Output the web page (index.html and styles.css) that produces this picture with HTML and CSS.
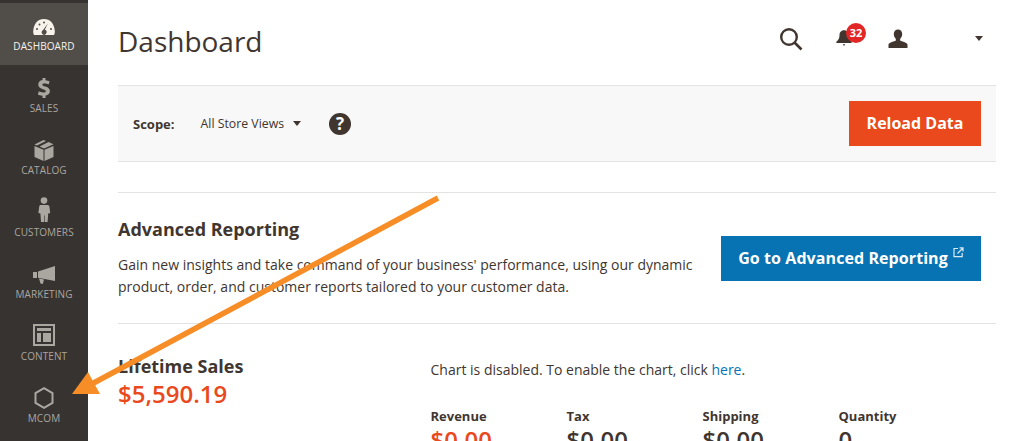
FILE: index.html
```html
<!DOCTYPE html>
<html lang="en">
<head>
<meta charset="utf-8">
<title>Dashboard</title>
<link rel="stylesheet" href="styles.css">
</head>
<body>
<div class="app">
  <nav class="sidebar">
    <a class="nav-item active">
      <svg class="nav-icon" viewBox="0 0 24 20"><path fill="#f7f3eb" d="M12 2C6 2 1.500 6.500 1.200 14.500c0 1.500.3 2.800.8 3.500h20c.5-.7.8-2 .8-3.500C22.500 6.500 18 2 12 2z"/><path fill="#514d49" d="M15.800 6.500l-3 6.200a2.600 2.600 0 1 1-2.300 4.600 2.600 2.600 0 0 1 .6-4.300z"/><circle cx="5" cy="12" r="1" fill="#514d49"/><circle cx="7.500" cy="7.500" r="1" fill="#514d49"/><circle cx="12" cy="5.500" r="1" fill="#514d49"/><circle cx="19" cy="12" r="1" fill="#514d49"/></svg>
      <span>DASHBOARD</span>
    </a>
    <a class="nav-item">
      <svg class="nav-icon" viewBox="-1.800 -0.150 27.600 27.600"><path fill="#aaa6a0" d="M10.300 1h3.400v2.500c2 .2 3.500.7 4.700 1.300l-1 3.700c-1.300-.6-3-1.100-4.900-1.100-1.700 0-2.400.6-2.400 1.300 0 .9 1 1.300 3.600 2.200 3.500 1.200 5.100 2.800 5.100 5.300s-1.800 4.500-5 5V24h-3.500v-2.500c-2.100-.1-4.100-.7-5.300-1.400l1-3.800c1.300.7 3.300 1.400 5.300 1.400 1.700 0 2.800-.6 2.800-1.600 0-.9-.9-1.500-3.200-2.200-3.300-1.100-5.500-2.600-5.500-5.400 0-2.500 1.800-4.500 4.900-5.100z"/></svg>
      <span>SALES</span>
    </a>
    <a class="nav-item">
      <svg class="nav-icon" viewBox="0 1 24 24"><path fill="#aaa6a0" d="M2.500 8l9 3.700V23l-9-4zM21.500 8v11l-9 4V11.700zM2.500 6.500l9-4.500 2.500 1-9 4.400zM7.500 8.400l9-4.500 5 2.400-9.400 4.200z"/></svg>
      <span>CATALOG</span>
    </a>
    <a class="nav-item">
      <svg class="nav-icon" viewBox="0 4 24 24"><circle cx="12" cy="3.600" r="3.300" fill="#aaa6a0"/><path fill="#aaa6a0" d="M8.500 8h7c1 0 1.700.7 1.900 1.600l.8 6.400-2 .6-.6 8.400h-2.800v-6.500h-.6V25H9l-.6-8.400-2-.6.8-6.400C7.600 8.700 7.500 8 8.500 8z"/></svg>
      <span>CUSTOMERS</span>
    </a>
    <a class="nav-item">
      <svg class="nav-icon" viewBox="0 0 24 24"><path fill="#aaa6a0" d="M1 9h4v6H1zM6 8.500L23 3v15L6 14.800zM7 15.500l5 1-1.200 4.500-2.300-.6z"/></svg>
      <span>MARKETING</span>
    </a>
    <a class="nav-item">
      <svg class="nav-icon" viewBox="0 2 24 24"><path fill="#aaa6a0" fill-rule="evenodd" d="M1 1h22v22H1zM3 3v18h18V3zM5 5h14v3H5zM5 10h4v9H5zM11 10h8v9h-8z"/></svg>
      <span>CONTENT</span>
    </a>
    <a class="nav-item">
      <svg class="nav-icon" viewBox="0 1 24 24"><path fill="none" stroke="#aaa6a0" stroke-width="2" d="M12 2.200l8.500 4.900v9.800L12 21.800l-8.500-4.900V7.100z"/></svg>
      <span>MCOM</span>
    </a>
  </nav>

  <main class="main">
    <header class="top">
      <h1>Dashboard</h1>
      <div class="actions">
        <svg class="search" viewBox="0 0 24 24"><circle cx="10" cy="10" r="7.800" fill="none" stroke="#41362f" stroke-width="2.400"/><path d="M15.500 15.500l7 7" stroke="#41362f" stroke-width="2.600"/></svg>
        <div class="bell">
          <svg viewBox="0 0 20 20"><path fill="#41362f" d="M10 1.500c3.400 0 5 2.600 5 5.500 0 3.500 1.300 5.500 3.500 7.300v1.200h-17v-1.200C3.700 12.500 5 10.500 5 7c0-2.900 1.600-5.500 5-5.500zM8.500 17h3l-1.500 2z"/></svg>
          <span class="badge">32</span>
        </div>
        <svg class="user" viewBox="0 0 20 20"><path fill="#41362f" d="M10 .5c2.600 0 4.200 1.900 4.200 4.600 0 2-.8 3.700-2 4.700v1.900c2.800.9 6.800 1.700 7.300 3.800V19H.5v-3.500c.5-2.100 4.500-2.900 7.300-3.800V9.800c-1.200-1-2-2.700-2-4.700C5.800 2.400 7.400.5 10 .5z"/></svg>
        <i class="caret"></i>
      </div>
    </header>

    <section class="scope">
      <b class="scope-label">Scope:</b>
      <span class="scope-value">All Store Views</span>
      <i class="caret scope-caret"></i>
      <span class="help">?</span>
      <button class="btn btn-orange"><span class="btn-text">Reload Data</span></button>
    </section>

    <section class="reporting">
      <div class="reporting-text">
        <h2>Advanced Reporting</h2>
        <p>Gain new insights and take command of your business' performance, using our dynamic product, order, and customer reports tailored to your customer data.</p>
      </div>
      <button class="btn btn-blue"><span class="btn-text">Go to Advanced Reporting</span><svg class="ext" viewBox="0 0 11 11"><path fill="none" stroke="#d9e9f3" stroke-width="1.200" d="M5 1.500H1v8.200h8.200V6M4.500 6.500L10 1M6.500.9H10v3.500"/></svg></button>
    </section>

    <section class="sales">
      <div class="lifetime">
        <h2>Lifetime Sales</h2>
        <div class="amount">$5,590.19</div>
      </div>
      <div class="chart">
        <p>Chart is disabled. To enable the chart, click <a>here</a>.</p>
        <div class="stats">
          <div class="stat"><b>Revenue</b><strong class="red">$0.00</strong></div>
          <div class="stat"><b>Tax</b><strong>$0.00</strong></div>
          <div class="stat"><b>Shipping</b><strong>$0.00</strong></div>
          <div class="stat"><b>Quantity</b><strong>0</strong></div>
        </div>
      </div>
    </section>
  </main>
</div>
<svg class="arrow" viewBox="0 0 1023 441" width="1023" height="441"><path d="M438 198L88 386" stroke="#f78d26" stroke-width="5.500" fill="none"/><path d="M72 394L88 372L100 394z" fill="#f78d26"/></svg>
</body>
</html>
```
FILE: styles.css
```css
* { box-sizing: border-box; }
html, body { margin: 0; height: 441px; overflow: hidden; background: #fff; }
body { font-family: "Open Sans", sans-serif; color: #41362f; font-size: 14px; }
.app { display: flex; height: 441px; overflow: hidden; }

.sidebar { width: 88px; flex: none; background: #373330; padding-top: 3px; }
.nav-item { display: flex; flex-direction: column; align-items: center; height: 62px; padding-top: 12px; color: #aaa6a0; font-size: 10px; line-height: 14px; letter-spacing: .1px; }
.nav-item.active { background: #514d49; color: #f7f3eb; }
.nav-icon { width: 24px; height: 24px; overflow: visible; }

.main { width: 878px; margin-left: 30px; flex: none; }
.top { display: flex; justify-content: space-between; align-items: center; height: 85px; }
h1 { margin: 0; font-size: 28px; font-weight: 400; color: #41362f; position: relative; top: -2px; }
.actions { display: flex; align-items: center; position: relative; top: -4px; height: 30px; margin-right: 13px; }
.search { width: 24px; height: 24px; margin-right: 32px; }
.bell { width: 20px; height: 20px; position: relative; margin-right: 33px; }
.bell svg { width: 18px; height: 18px; display: block; }
.badge { position: absolute; left: 11px; top: -6px; width: 20px; height: 20px; border-radius: 50%; background: #e22626; color: #fff; font-size: 11px; font-weight: 700; line-height: 20px; text-align: center; }
.user { width: 20px; height: 20px; margin-right: 67px; }
.caret { width: 0; height: 0; border: 4px solid transparent; border-top: 5px solid #41362f; border-bottom: 0; display: block; }

.scope { display: flex; align-items: center; height: 77px; background: #f8f8f8; border-top: 1px solid #e3e3e3; border-bottom: 1px solid #e3e3e3; padding: 0 15px; }
.scope-label { font-size: 13px; font-weight: 700; margin-right: 26px; }
.scope-value { font-size: 12.300px; }
.scope-caret { margin-left: 9px; margin-right: 28px; }
.help { width: 22px; height: 22px; border-radius: 50%; background: #41362f; color: #fff; font-size: 17px; font-weight: 700; line-height: 22px; text-align: center; }
.btn { border: 0; color: #fff; font-family: inherit; font-size: 16px; font-weight: 700; height: 45px; padding: 0 0 2px; }
.btn-orange { background: #e9491c; margin-left: auto; width: 132px; }
.btn-blue { background: #0773b2; width: 260px; flex: none; margin-top: 19px; letter-spacing: .08px; }
.ext { width: 11px; height: 11px; margin-left: 5px; vertical-align: 6px; }

.reporting { display: flex; justify-content: space-between; margin-top: 30px; height: 132px; border-top: 1px solid #e3e3e3; border-bottom: 1px solid #e3e3e3; padding: 24px 15px 0 0; }
h2 { margin: 0; font-size: 18px; font-weight: 700; color: #41362f; line-height: 25px; }
.reporting p { margin: 12px 0 0; font-size: 14px; line-height: 22px; width: 590px; }

.sales { display: flex; padding-top: 30px; }
.lifetime { width: 312.500px; }
.amount { color: #e9491c; font-size: 24px; font-weight: 600; line-height: 30px; }
.chart { flex: 1; }
.chart p { margin: 5px 0 0; font-size: 14px; line-height: 21px; }
.chart a { color: #0773b2; }
.stats { display: flex; margin-top: 27px; }
.stat { width: 136px; }
.stat b { display: block; font-size: 13px; font-weight: 700; line-height: 18px; }
.stat strong { display: block; font-size: 24px; font-weight: 600; line-height: 30px; }
.stat .red { color: #e9491c; }

.arrow { position: absolute; left: 0; top: 0; pointer-events: none; }
```
